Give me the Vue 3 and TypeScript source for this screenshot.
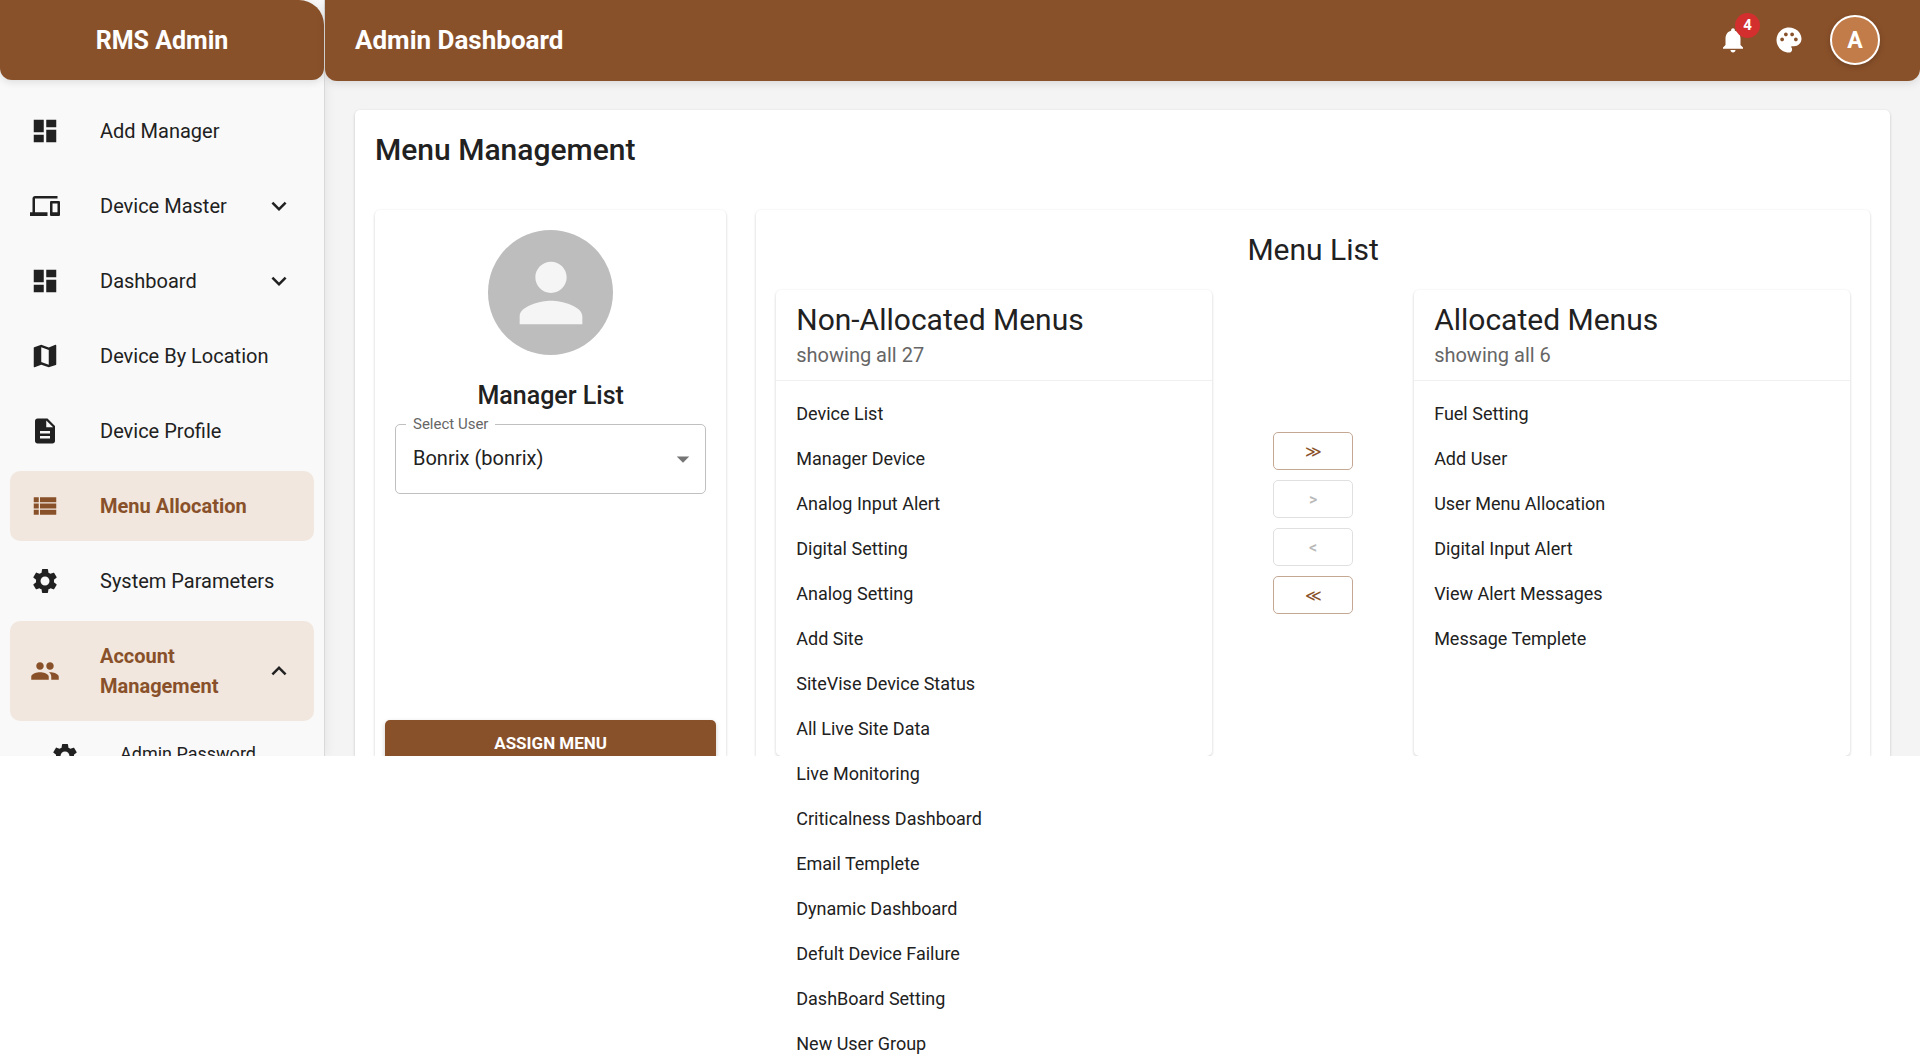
<script setup lang="ts">
import { ref } from 'vue'

interface NavItem {
  label: string
  icon: string
  active?: boolean
  chevron?: 'down' | 'up'
  sub?: boolean
}

const icons: Record<string, string> = {
  dashboard: 'M3 13h8V3H3v10zm0 8h8v-6H3v6zm10 0h8V11h-8v10zm0-18v6h8V3h-8z',
  devices: 'M4 6h18V4H4c-1.1 0-2 .9-2 2v11H0v3h14v-3H4V6zm19 2h-6c-.55 0-1 .45-1 1v10c0 .55.45 1 1 1h6c.55 0 1-.45 1-1V9c0-.55-.45-1-1-1zm-1 9h-4v-7h4v7z',
  map: 'M20.5 3l-.16.03L15 5.1 9 3 3.36 4.9c-.21.07-.36.25-.36.48V20.5c0 .28.22.5.5.5l.16-.03L9 18.9l6 2.1 5.64-1.9c.21-.07.36-.25.36-.48V3.5c0-.28-.22-.5-.5-.5zM15 19l-6-2.11V5l6 2.11V19z',
  document: 'M14 2H6c-1.1 0-1.99.9-1.99 2L4 20c0 1.1.89 2 1.99 2H18c1.1 0 2-.9 2-2V8l-6-6zm2 16H8v-2h8v2zm0-4H8v-2h8v2zm-3-5V3.5L18.5 9H13z',
  list: 'M3 14h4v-4H3v4zm0 5h4v-4H3v4zM3 9h4V5H3v4zm5 5h13v-4H8v4zm0 5h13v-4H8v4zM8 5v4h13V5H8z',
  settings: 'M19.14 12.94c.04-.3.06-.61.06-.94 0-.32-.02-.64-.07-.94l2.03-1.58c.18-.14.23-.41.12-.61l-1.92-3.32c-.12-.22-.37-.29-.59-.22l-2.39.96c-.5-.38-1.03-.7-1.62-.94l-.36-2.54c-.04-.24-.24-.41-.48-.41h-3.84c-.24 0-.43.17-.47.41l-.36 2.54c-.59.24-1.13.57-1.62.94l-2.39-.96c-.22-.08-.47 0-.59.22L2.74 8.87c-.12.21-.08.47.12.61l2.03 1.58c-.05.3-.09.63-.09.94s.02.64.07.94l-2.03 1.58c-.18.14-.23.41-.12.61l1.92 3.32c.12.22.37.29.59.22l2.39-.96c.5.38 1.03.7 1.62.94l.36 2.54c.05.24.24.41.48.41h3.84c.24 0 .44-.17.47-.41l.36-2.54c.59-.24 1.13-.56 1.62-.94l2.39.96c.22.08.47 0 .59-.22l1.92-3.32c.12-.22.07-.47-.12-.61l-2.01-1.58zM12 15.6c-1.98 0-3.6-1.62-3.6-3.6s1.62-3.6 3.6-3.6 3.6 1.62 3.6 3.6-1.62 3.6-3.6 3.6z',
  people: 'M16 11c1.66 0 2.99-1.34 2.99-3S17.66 5 16 5c-1.66 0-3 1.34-3 3s1.34 3 3 3zm-8 0c1.66 0 2.99-1.34 2.99-3S9.66 5 8 5C6.34 5 5 6.34 5 8s1.34 3 3 3zm0 2c-2.33 0-7 1.17-7 3.5V19h14v-2.5c0-2.33-4.67-3.5-7-3.5zm8 0c-.29 0-.62.02-.97.05 1.16.84 1.97 1.97 1.97 3.45V19h6v-2.5c0-2.33-4.67-3.5-7-3.5z',
  down: 'M16.59 8.59L12 13.17 7.41 8.59 6 10l6 6 6-6z',
  up: 'M12 8l-6 6 1.41 1.41L12 10.83l4.59 4.58L18 14z',
}

const navItems: NavItem[] = [
  { label: 'Add Manager', icon: 'dashboard' },
  { label: 'Device Master', icon: 'devices', chevron: 'down' },
  { label: 'Dashboard', icon: 'dashboard', chevron: 'down' },
  { label: 'Device By Location', icon: 'map' },
  { label: 'Device Profile', icon: 'document' },
  { label: 'Menu Allocation', icon: 'list', active: true },
  { label: 'System Parameters', icon: 'settings' },
  { label: 'Account Management', icon: 'people', active: true, chevron: 'up' },
  { label: 'Admin Password', icon: 'settings', sub: true },
]

const nonAllocated: string[] = [
  'Device List', 'Manager Device', 'Analog Input Alert', 'Digital Setting', 'Analog Setting',
  'Add Site', 'SiteVise Device Status', 'All Live Site Data', 'Live Monitoring',
  'Criticalness Dashboard', 'Email Templete', 'Dynamic Dashboard', 'Defult Device Failure',
  'DashBoard Setting', 'New User Group',
]

const allocated: string[] = [
  'Fuel Setting', 'Add User', 'User Menu Allocation', 'Digital Input Alert',
  'View Alert Messages', 'Message Templete',
]

const transfers = [
  { text: '≫', disabled: false },
  { text: '>', disabled: true },
  { text: '<', disabled: true },
  { text: '≪', disabled: false },
]

const user = ref('bonrix')
</script>

<template>
  <div class="page">
    <div class="shell">
      <aside class="sidebar">
        <div class="brand">RMS Admin</div>
        <nav class="nav">
          <a
            v-for="item in navItems"
            :key="item.label"
            href="#"
            class="nav-item"
            :class="{ active: item.active, sub: item.sub }"
          >
            <svg class="icon" viewBox="0 0 24 24" aria-hidden="true"><path :d="icons[item.icon]" /></svg>
            <span class="nav-label">{{ item.label }}</span>
            <svg v-if="item.chevron" class="icon chevron" viewBox="0 0 24 24" aria-hidden="true">
              <path :d="icons[item.chevron]" />
            </svg>
          </a>
        </nav>
      </aside>

      <div class="content">
        <header class="topbar">
          <h1 class="topbar-title">Admin Dashboard</h1>
          <button class="icon-button" type="button" aria-label="Notifications">
            <svg class="icon" viewBox="0 0 24 24" aria-hidden="true">
              <path d="M12 22c1.1 0 2-.9 2-2h-4c0 1.1.89 2 2 2zm6-6v-5c0-3.07-1.64-5.64-4.5-6.32V4c0-.83-.67-1.5-1.5-1.5s-1.5.67-1.5 1.5v.68C7.63 5.36 6 7.92 6 11v5l-2 2v1h16v-1l-2-2z" />
            </svg>
            <span class="badge">4</span>
          </button>
          <button class="icon-button" type="button" aria-label="Theme">
            <svg class="icon" viewBox="0 0 24 24" aria-hidden="true">
              <path d="M12 2C6.49 2 2 6.49 2 12s4.49 10 10 10c1.38 0 2.5-1.12 2.5-2.5 0-.61-.23-1.2-.64-1.67-.08-.1-.13-.21-.13-.33 0-.28.22-.5.5-.5H16c3.31 0 6-2.69 6-6 0-4.96-4.49-9-10-9zm5.5 11c-.83 0-1.5-.67-1.5-1.5s.67-1.5 1.5-1.5 1.5.67 1.5 1.5-.67 1.5-1.5 1.5zm-3-4c-.83 0-1.5-.67-1.5-1.5S13.67 6 14.5 6s1.5.67 1.5 1.5S15.33 9 14.5 9zM5 11.5c0-.83.67-1.5 1.5-1.5s1.5.67 1.5 1.5S7.33 13 6.5 13 5 12.33 5 11.5zm6-4c0 .83-.67 1.5-1.5 1.5S8 8.33 8 7.5 8.67 6 9.5 6s1.5.67 1.5 1.5z" />
            </svg>
          </button>
          <button class="avatar" type="button" aria-label="Account">A</button>
        </header>

        <main class="main">
          <section class="card pane outer">
            <h2 class="page-title">Menu Management</h2>
            <div class="columns">
              <section class="card pane manager">
                <div class="portrait">
                  <svg viewBox="0 0 24 24" aria-hidden="true">
                    <path d="M12 12c2.21 0 4-1.79 4-4s-1.79-4-4-4-4 1.79-4 4 1.79 4 4 4zm0 2c-2.67 0-8 1.34-8 4v2h16v-2c0-2.66-5.33-4-8-4z" />
                  </svg>
                </div>
                <h3 class="manager-title">Manager List</h3>
                <div class="field">
                  <label class="field-label" for="user">Select User</label>
                  <select id="user" v-model="user" class="field-select">
                    <option value="bonrix">Bonrix (bonrix)</option>
                  </select>
                  <svg class="icon field-arrow" viewBox="0 0 24 24" aria-hidden="true"><path d="M7 10l5 5 5-5z" /></svg>
                </div>
                <button class="assign" type="button">ASSIGN MENU</button>
              </section>

              <section class="card pane menus">
                <h3 class="menus-title">Menu List</h3>
                <div class="transfer">
                  <section class="card list-card">
                    <div class="list-head">
                      <h4 class="list-title">Non-Allocated Menus</h4>
                      <p class="list-sub">showing all 27</p>
                    </div>
                    <ul class="list">
                      <li v-for="name in nonAllocated" :key="name">{{ name }}</li>
                    </ul>
                  </section>
                  <div class="moves">
                    <button
                      v-for="move in transfers"
                      :key="move.text"
                      type="button"
                      class="move"
                      :disabled="move.disabled"
                    >{{ move.text }}</button>
                  </div>
                  <section class="card list-card">
                    <div class="list-head">
                      <h4 class="list-title">Allocated Menus</h4>
                      <p class="list-sub">showing all 6</p>
                    </div>
                    <ul class="list">
                      <li v-for="name in allocated" :key="name">{{ name }}</li>
                    </ul>
                  </section>
                </div>
              </section>
            </div>
          </section>
        </main>
      </div>
    </div>
    <div class="below"></div>
  </div>
</template>

<style>
body {
  margin: 0;
  background: #fff;
}
</style>

<style scoped>
* {
  box-sizing: border-box;
}

h1, h2, h3, h4, p, ul {
  margin: 0;
  padding: 0;
  font-weight: 400;
}

button, select {
  font-family: inherit;
}

.page {
  display: flex;
  flex-direction: column;
  height: 100vh;
  overflow: hidden;
  font-family: Roboto, "Liberation Sans", sans-serif;
  font-size: 20px;
  line-height: 30px;
  color: #212121;
}

.shell {
  display: flex;
  flex: none;
  height: calc(100vh - 302px);
  background: #f4f4f4;
}

/* The long menu list runs on over this blank area. */
.below {
  position: relative;
  z-index: 1;
  flex: 1;
  background: #fff;
}

.icon {
  flex: none;
  width: 30px;
  height: 30px;
  fill: currentColor;
}

.sidebar {
  flex: none;
  width: 325px;
  overflow: hidden;
  background: #f9f9f9;
  border-right: 1px solid #d9d9d9;
  box-shadow: 2px 0 10px rgba(0, 0, 0, 0.06);
}

.brand {
  display: flex;
  align-items: center;
  justify-content: center;
  height: 80px;
  padding-top: 2px;
  border-radius: 0 25px 12px 12px;
  background: #89512a;
  color: #fff;
  font-size: 25px;
  font-weight: 700;
  box-shadow: 0 2px 8px rgba(0, 0, 0, 0.12);
}

.nav {
  display: flex;
  flex-direction: column;
  gap: 5px;
  padding: 16px 10px 0;
}

.nav-item {
  display: flex;
  align-items: center;
  flex: none;
  padding: 20px;
  border-radius: 10px;
  color: #212121;
  text-decoration: none;
}

.nav-item.active {
  background: #f1e7de;
  color: #89512a;
  font-weight: 700;
}

.nav-item.sub {
  margin-top: -5px;
  padding-left: 40px;
  font-size: 18px;
  line-height: 26px;
}

.nav-item.sub .nav-label {
  padding-bottom: 4px;
}

.nav-label {
  flex: 1;
  margin-left: 40px;
}

.chevron {
  color: #212121;
}

.content {
  display: flex;
  flex: 1;
  flex-direction: column;
  min-width: 0;
}

.topbar {
  display: flex;
  align-items: center;
  flex: none;
  height: 81px;
  padding: 0 40px 1px 30px;
  border-radius: 0 0 12px 12px;
  background: #89512a;
  color: #fff;
  box-shadow: 0 2px 10px rgba(0, 0, 0, 0.12);
}

.topbar-title {
  flex: 1;
  font-size: 26px;
  font-weight: 700;
}

.icon-button {
  position: relative;
  display: flex;
  margin-right: 26px;
  padding: 0;
  border: 0;
  background: none;
  color: #fff;
}

.badge {
  position: absolute;
  top: -12px;
  right: -12px;
  width: 25px;
  height: 25px;
  border-radius: 50%;
  background: #d32f2f;
  font-size: 15px;
  font-weight: 700;
  line-height: 25px;
  text-align: center;
}

.avatar {
  width: 50px;
  height: 50px;
  padding: 0;
  border: 2px solid #fff;
  border-radius: 50%;
  background: #c27c49;
  color: #fff;
  font-size: 23px;
  font-weight: 700;
  box-shadow: 0 2px 6px rgba(0, 0, 0, 0.2);
}

.main {
  display: flex;
  flex: 1;
  min-height: 0;
  padding: 29px 30px 0;
}

.card {
  border-radius: 5px;
  background: #fff;
  box-shadow: 0 1px 3px rgba(0, 0, 0, 0.2);
}

/* Panes run down to the end of the shell, so only their top corners are round. */
.pane {
  border-radius: 5px 5px 0 0;
}

.outer {
  display: flex;
  flex: 1;
  flex-direction: column;
  min-width: 0;
  padding: 20px 20px 0;
}

.page-title {
  font-size: 30px;
  font-weight: 500;
  line-height: 40px;
}

.columns {
  display: grid;
  flex: 1;
  grid-template-columns: repeat(12, 1fr);
  gap: 30px;
  min-height: 0;
  margin-top: 40px;
}

.manager {
  display: flex;
  grid-column: span 3;
  flex-direction: column;
  min-height: 0;
  padding: 20px 10px 0;
}

.portrait {
  display: flex;
  align-items: center;
  justify-content: center;
  align-self: center;
  flex: none;
  width: 125px;
  height: 125px;
  border-radius: 50%;
  background: #bdbdbd;
}

.portrait svg {
  width: 94px;
  height: 94px;
  fill: #f5f5f5;
}

.manager-title {
  margin-top: 21px;
  font-size: 25px;
  font-weight: 500;
  line-height: 40px;
  text-align: center;
}

.field {
  position: relative;
  flex: none;
  margin: 8px 10px 0;
}

.field-label {
  position: absolute;
  top: -10px;
  left: 11px;
  padding: 0 7px;
  background: #fff;
  color: #666;
  font-size: 15px;
  line-height: 20px;
}

.field-select {
  display: block;
  width: 100%;
  height: 70px;
  padding: 0 50px 2px 17px;
  border: 1px solid #c0c0c0;
  border-radius: 5px;
  appearance: none;
  background: #fff;
  color: #212121;
  font-size: 20px;
}

.field-arrow {
  position: absolute;
  top: 20px;
  right: 8px;
  color: #757575;
  pointer-events: none;
}

.assign {
  flex: none;
  height: 46px;
  margin-top: auto;
  margin-bottom: -10px;
  border: 0;
  border-radius: 5px;
  background: #89512a;
  color: #fff;
  font-size: 17px;
  font-weight: 700;
  box-shadow: 0 2px 5px rgba(0, 0, 0, 0.2);
}

.menus {
  display: flex;
  grid-column: span 9;
  flex-direction: column;
  min-height: 0;
  padding: 20px 20px 0;
}

.menus-title {
  font-size: 30px;
  line-height: 40px;
  text-align: center;
}

.transfer {
  display: grid;
  flex: 1;
  grid-template-columns: 1fr auto 1fr;
  min-height: 0;
  margin-top: 20px;
}

.list-card {
  min-height: 0;
}

.list-head {
  padding: 10px 20px;
  border-bottom: 1px solid #f0f0f0;
}

.list-title {
  font-size: 30px;
  line-height: 40px;
}

.list-sub {
  color: #666;
}

.list {
  position: relative;
  z-index: 2;
  padding: 10px 20px;
  font-size: 18px;
  line-height: 45px;
  list-style: none;
}

.moves {
  display: flex;
  flex-direction: column;
  justify-content: center;
  gap: 10px;
  padding: 0 61px;
}

.move {
  width: 80px;
  height: 38px;
  padding: 0;
  border: 1px solid #c4a894;
  border-radius: 5px;
  background: #fff;
  color: #89512a;
  font-size: 16px;
  font-weight: 400;
}

.move:disabled {
  border-color: #e0e0e0;
  color: #b8b8b8;
  font-weight: 500;
}
</style>
